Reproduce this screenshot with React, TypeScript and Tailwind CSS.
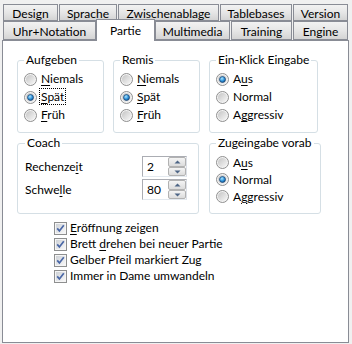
import React from 'react'

const Radio = ({ checked }: { checked?: boolean }) => (
  <svg width="13" height="13" viewBox="0 0 13 13" className="shrink-0">
    <defs>
      <linearGradient id="rfill" x1="0" y1="0" x2="1" y2="1">
        <stop offset="0" stopColor="#c4c4c4" />
        <stop offset="1" stopColor="#f7f7f7" />
      </linearGradient>
      <radialGradient id="rdot" cx="0.4" cy="0.35" r="0.75">
        <stop offset="0" stopColor="#a8e4ff" />
        <stop offset="0.55" stopColor="#2b8fd8" />
        <stop offset="1" stopColor="#0d3f73" />
      </radialGradient>
    </defs>
    <circle cx="6.5" cy="6.5" r="6" fill="#f3f3f3" stroke="#8f8f8f" />
    <circle cx="6.5" cy="6.5" r="4.6" fill="url(#rfill)" />
    {checked && <circle cx="6.5" cy="6.5" r="3" fill="url(#rdot)" stroke="#1c4470" strokeWidth="0.7" />}
  </svg>
)

const Check = () => (
  <svg width="13" height="13" viewBox="0 0 13 13" className="shrink-0">
    <defs>
      <linearGradient id="cfill" x1="0" y1="0" x2="1" y2="1">
        <stop offset="0" stopColor="#cdd1d6" />
        <stop offset="1" stopColor="#f8f8f8" />
      </linearGradient>
    </defs>
    <rect x="0.5" y="0.5" width="12" height="12" fill="#f5f5f5" stroke="#8e8f8f" />
    <rect x="2" y="2" width="9" height="9" fill="url(#cfill)" />
    <path d="M3.2 6.4 L5.4 8.9 L9.8 3.2" stroke="#4a67a6" strokeWidth="1.7" fill="none" />
  </svg>
)

const Arrow = ({ up }: { up?: boolean }) => (
  <svg width="7" height="4" viewBox="0 0 7 4">
    <path d={up ? 'M0.5 3.5 L3.5 0.5 L6.5 3.5 Z' : 'M0.5 0.5 L3.5 3.5 L6.5 0.5 Z'} fill="#4d6585" />
  </svg>
)

const Spinner = ({ value }: { value: string }) => (
  <div className="flex h-[21px] w-[45px] border border-[#abadb3] border-r-[#dbdfe6] border-b-[#e3e9ef] bg-white">
    <div className="flex-1 pl-[4px] leading-[19px]">{value}</div>
    <div className="flex w-[18px] flex-col">
      <div className="flex h-[10px] items-center justify-center rounded-[2px] border border-[#b2b2b2] bg-gradient-to-b from-[#f4f4f4] to-[#dcdcdc]">
        <Arrow up />
      </div>
      <div className="flex h-[9px] items-center justify-center rounded-[2px] border border-[#b2b2b2] bg-gradient-to-b from-[#f4f4f4] to-[#dcdcdc]">
        <Arrow />
      </div>
    </div>
  </div>
)

const Group = ({ title, className, children }: { title: string; className: string; children: React.ReactNode }) => (
  <fieldset className={`rounded-[3px] border border-[#d5dfe5] px-[6px] ${className}`}>
    <legend className="h-[16px] whitespace-nowrap px-[2px] leading-[16px]">{title}</legend>
    {children}
  </fieldset>
)

const Option = ({ checked, h, children }: { checked?: boolean; h: string; children: React.ReactNode }) => (
  <div className={`flex items-center gap-[4px] whitespace-nowrap ${h}`}>
    <Radio checked={checked} />
    <span>{children}</span>
  </div>
)

const Tab = ({ label, w, active }: { label: string; w: string; active?: boolean }) =>
  active ? (
    <div className={`relative z-10 -mt-[2px] flex h-[22px] justify-center border border-b-0 border-[#898c95] bg-white pt-[2px] ${w}`}>
      {label}
    </div>
  ) : (
    <div className={`flex items-center justify-center border border-[#898c95] bg-gradient-to-b from-[#f2f2f2] via-[#e6e6e6] to-[#d4d4d4] pt-[2px] ${w}`}>
      {label}
    </div>
  )

const U = ({ children }: { children: React.ReactNode }) => (
  <u className="decoration-1 underline-offset-[2px]">{children}</u>
)

export default function App() {
  return (
    <div className="h-[344px] w-[352px] bg-[#f0f0f0] pt-[4px] font-['Lato',sans-serif] text-[12px] text-black">
      <div className="flex h-[17px] gap-[1px] pl-[3px]">
        <Tab label="Design" w="w-[55px]" />
        <Tab label="Sprache" w="w-[58px]" />
        <Tab label="Zwischenablage" w="w-[101px]" />
        <Tab label="Tablebases" w="w-[72px]" />
        <Tab label="Version" w="w-[55px]" />
      </div>
      <div className="flex h-[19px] pl-[3px]">
        <Tab label="Uhr+Notation" w="w-[93px]" />
        <Tab label="Partie" w="w-[59px]" active />
        <Tab label="Multimedia" w="w-[75px]" />
        <div className="ml-[1px] flex">
          <Tab label="Training" w="w-[61px]" />
        </div>
        <div className="ml-[1px] flex">
          <Tab label="Engine" w="w-[55px]" />
        </div>
      </div>
      <div className="ml-[2px] h-[303px] w-[347px] border border-[#898c95] bg-white pl-[14px] pt-[11px]">
        <div className="flex items-start gap-[9px]">
          <Group title="Aufgeben" className="w-[87px] pt-[2px] pb-[8px]">
            <Option h="h-[18px]"><U>N</U>iemals</Option>
            <Option h="h-[18px]" checked>
              <span className="-mx-[2px] border border-dotted border-black px-[1px] leading-[12px]"><U>S</U>pät</span>
            </Option>
            <Option h="h-[18px]"><U>F</U>rüh</Option>
          </Group>
          <Group title="Remis" className="w-[87px] pt-[2px] pb-[8px]">
            <Option h="h-[18px]"><U>N</U>iemals</Option>
            <Option h="h-[18px]" checked><U>S</U>pät</Option>
            <Option h="h-[18px]"><U>F</U>rüh</Option>
          </Group>
          <Group title="Ein-Klick Eingabe" className="w-[105px] pt-[2px] pb-[8px]">
            <Option h="h-[18px]" checked>A<U>u</U>s</Option>
            <Option h="h-[18px]">Normal</Option>
            <Option h="h-[18px]">A<U>g</U>gressiv</Option>
          </Group>
        </div>
        <div className="mt-[2px] flex items-start gap-[10px]">
          <Group title="Coach" className="w-[182px] pt-[5px] pb-[13px] pl-[7px]">
            <div className="flex h-[21px] items-center">
              <span className="w-[117px]">Rechenze<U>i</U>t</span>
              <Spinner value="2" />
            </div>
            <div className="mt-[2px] flex h-[21px] items-center">
              <span className="w-[117px]">Schwe<U>l</U>le</span>
              <Spinner value="80" />
            </div>
          </Group>
          <Group title="Zugeingabe vorab" className="w-[105px] pt-[3px] pb-[8px]">
            <Option h="h-[17px]">A<U>u</U>s</Option>
            <Option h="h-[17px]" checked>Normal</Option>
            <Option h="h-[17px]">A<U>g</U>gressiv</Option>
          </Group>
        </div>
        <div className="ml-[37px] mt-[6px] flex flex-col">
          <div className="flex h-[16px] items-center gap-[3px]">
            <Check />
            <span><U>E</U>röffnung zeigen</span>
          </div>
          <div className="flex h-[16px] items-center gap-[3px]">
            <Check />
            <span>Brett <U>d</U>rehen bei neuer Partie</span>
          </div>
          <div className="flex h-[16px] items-center gap-[3px]">
            <Check />
            <span>Gelber Pfeil markiert Zug</span>
          </div>
          <div className="flex h-[16px] items-center gap-[3px]">
            <Check />
            <span>Immer in Dame umwandeln</span>
          </div>
        </div>
      </div>
    </div>
  )
}
